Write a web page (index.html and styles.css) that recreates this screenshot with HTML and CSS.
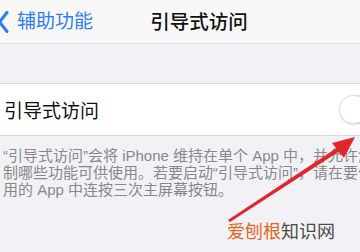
FILE: index.html
```html
<!DOCTYPE html>
<html lang="zh-CN">
<head>
    <meta charset="UTF-8">
    <meta name="viewport" content="width=device-width, initial-scale=1.0">
    <title>引导式访问</title>
    <link rel="stylesheet" href="styles.css">
</head>
<body>
    <div class="screen">
        <!-- Navigation bar -->
        <header class="nav-bar">
            <a class="back-link" href="#">
                <svg class="back-icon" width="11" height="22" viewBox="0 0 11 22">
                    <polyline points="9,1.5 1.5,11 9,20.5" fill="none" stroke="#2f7cf6" stroke-width="3" stroke-linecap="round" stroke-linejoin="round"/>
                </svg>
                <span>辅助功能</span>
            </a>
            <h1 class="nav-title">引导式访问</h1>
            <span class="nav-spacer"></span>
        </header>

        <!-- Settings group -->
        <section class="settings-group">
            <div class="settings-row">
                <span class="row-label">引导式访问</span>
                <span class="toggle"><span class="toggle-knob"></span></span>
            </div>
        </section>

        <p class="group-footer">
            <span class="footer-line">“引导式访问”会将 iPhone 维持在单个 App 中，并允许您控</span>
            <span class="footer-line">制哪些功能可供使用。若要启动“引导式访问”，请在要使</span>
            <span class="footer-line">用的 App 中连按三次主屏幕按钮。</span>
        </p>

        <!-- Annotation arrow and watermark -->
        <svg class="annotation" width="360" height="252" viewBox="0 0 360 252">
            <polygon points="228,220 341,145 343,149 230,222" fill="#e3262b"/>
            <polygon points="355,137 332,143 344,158" fill="#e3262b"/>
        </svg>
        <div class="watermark"><span class="wm-orange">爱刨根</span>知识网</div>
    </div>
</body>
</html>
```

FILE: styles.css
```css
/* Page */
body {
    margin: 0;
    padding: 0;
    overflow: hidden;
    background-color: #f2f2f6;
    font-family: "Liberation Sans", "Noto Sans CJK SC", sans-serif;
}

.screen {
    position: relative;
    width: 398px;
    height: 252px;
    overflow: hidden;
    background-color: #f2f2f6;
}

/* Navigation bar */
.nav-bar {
    display: grid;
    grid-template-columns: 1fr auto 1fr;
    align-items: center;
    height: 43px;
    background-color: #f8f8f9;
    border-bottom: 1px solid #dedee2;
}

.back-link {
    display: flex;
    align-items: center;
    gap: 8px;
    margin-left: -2px;
    color: #2f7cf6;
    text-decoration: none;
    font-size: 19px;
    line-height: 22px;
}

.back-icon {
    display: block;
}

.nav-title {
    margin: 0;
    font-size: 19.5px;
    font-weight: 500;
    color: #111;
    line-height: 22px;
}

/* Settings group */
.settings-group {
    margin-top: 39px;
    background-color: #fff;
    border-top: 1px solid #d9d9dd;
    border-bottom: 1px solid #d9d9dd;
}

.settings-row {
    display: flex;
    align-items: center;
    justify-content: space-between;
    height: 51px;
    padding: 0 8px 0 4px;
}

.row-label {
    font-size: 19px;
    color: #111;
}

.toggle {
    display: flex;
    align-items: center;
    width: 49px;
    height: 27px;
    border: 1px solid #e2e2e4;
    border-radius: 15px;
    background-color: #fff;
}

.toggle-knob {
    width: 27px;
    height: 27px;
    border-radius: 50%;
    background-color: #fff;
    box-shadow: 0 0 0 1px #e0e0e2, 0 2px 3px rgba(0, 0, 0, 0.12);
}

/* Footer text */
.group-footer {
    margin: 0;
    padding: 11px 0 0 3px;
    font-size: 15px;
    line-height: 17px;
    color: #88888c;
}

.footer-line {
    display: block;
    white-space: nowrap;
}

/* Overlays */
.annotation {
    position: absolute;
    top: 0;
    left: 0;
}

.watermark {
    position: absolute;
    left: 227px;
    top: 220px;
    font-size: 18px;
    line-height: 24px;
    color: #4a4a4a;
    white-space: nowrap;
}

.wm-orange {
    color: #e2671d;
}
```
